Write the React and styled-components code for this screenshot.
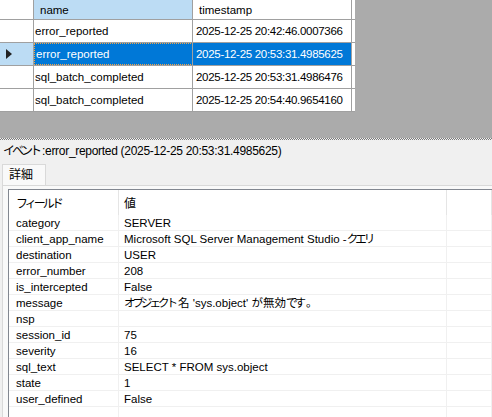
import React from 'react'
import styled, { createGlobalStyle } from 'styled-components'

const Global = createGlobalStyle`
  html, body {
    margin: 0;
    padding: 0;
    overflow: hidden;
  }
  body {
    font-family: "Liberation Sans", "Noto Sans CJK JP", sans-serif;
    font-size: 11px;
    line-height: 14px;
    color: #000;
  }
`

const Window = styled.div`
  width: 492px;
  height: 417px;
  display: flex;
  flex-direction: column;
  overflow: hidden;
  background: #f0f0f0;
`

const TopPane = styled.div`
  height: 138px;
  flex: none;
  background: #ababab;
`

const Splitter = styled.div`
  height: 2px;
  flex: none;
  background-color: #f0f0f0;
  background-image: repeating-conic-gradient(#7a7a7a 0 25%, #f0f0f0 0 50%);
  background-size: 2px 2px;
`

const EventGrid = styled.div`
  width: 355px;
  background: #fff;
`

const GridRow = styled.div`
  display: flex;
  height: ${p => (p.$header ? '19px' : '22px')};
  border-bottom: 1px solid #a0a0a0;
`

const RowHead = styled.div`
  width: 34px;
  flex: none;
  border-right: 1px solid #a0a0a0;
  background: ${p => (p.$current ? '#bcdcf4' : '#fff')};
  display: flex;
  align-items: center;
  padding-left: 6px;
  box-sizing: border-box;
`

const ColHead = styled.div`
  width: 159px;
  flex: none;
  border-right: 1px solid #a0a0a0;
  background: ${p => (p.$active ? '#bcdcf4' : '#fff')};
  padding-left: 6px;
  box-sizing: border-box;
  display: flex;
  align-items: center;
  font-size: 11.5px;
`

const Cell = styled.div`
  width: 159px;
  flex: none;
  box-sizing: border-box;
  display: flex;
  align-items: center;
  padding-left: ${p => (p.$time ? '3px' : '1px')};
  letter-spacing: ${p => (p.$time ? '-0.3px' : '0')};
  font-size: 11.5px;
  white-space: nowrap;
  overflow: hidden;
  background: ${p => (p.$selected ? '#0078d7' : '#fff')};
  color: ${p => (p.$selected ? '#fff' : '#000')};
  border: ${p => (p.$focus ? '1px dotted #f2a64a' : 'none')};
  border-right: 1px solid #a0a0a0;
`

const Pointer = () => (
  <svg width="6" height="10" viewBox="0 0 6 10">
    <path d="M0 0 L6 5 L0 10 Z" fill="#222" />
  </svg>
)

const BottomPane = styled.div`
  flex: 1;
  display: flex;
  flex-direction: column;
  min-height: 0;
`

const Caption = styled.div`
  height: 24px;
  flex: none;
  padding: 4px 0 0 3px;
  box-sizing: border-box;
  font-size: 12px;
  line-height: 14px;
  letter-spacing: -0.3px;
  white-space: nowrap;
`

const Kana = styled.span`
  letter-spacing: -3px;
  margin-right: 3px;
`

const TabStrip = styled.div`
  display: flex;
  padding-left: 2px;
  height: 21px;
  flex: none;
`

const Tab = styled.div`
  width: 44px;
  background: #f9f9f9;
  border: 1px solid #d9d9d9;
  border-bottom: none;
  box-sizing: border-box;
  padding: 3px 0 0 6px;
  font-size: 12px;
`

const TabPage = styled.div`
  flex: 1;
  margin-left: 2px;
  background: #f9f9f9;
  border-top: 1px solid #d9d9d9;
  border-left: 1px solid #d9d9d9;
  padding: 3px 0 0 5px;
  min-height: 0;
`

const DetailGrid = styled.div`
  border-top: 1px solid #828790;
  border-left: 1px solid #828790;
  background: #fff;
  height: 100%;
`

const DetailRow = styled.div`
  display: grid;
  grid-template-columns: 110px 328px 1fr;
  height: ${p => (p.$header ? '25px' : '15px')};
  border-bottom: ${p => (p.$header ? 'none' : '1px solid #f0f0f0')};
`

const DetailCell = styled.div`
  display: flex;
  align-items: center;
  padding-left: ${p => (p.$first ? '7px' : '5px')};
  border-right: 1px solid ${p => (p.$header ? '#e5e5e5' : '#f0f0f0')};
  white-space: nowrap;
  overflow: hidden;
  font-size: ${p => (p.$header ? '12px' : '11.5px')};
  padding-top: ${p => (p.$header ? '2px' : '1px')};
`

const events = [
  { name: 'error_reported', time: '2025-12-25 20:42:46.0007366' },
  { name: 'error_reported', time: '2025-12-25 20:53:31.4985625', selected: true },
  { name: 'sql_batch_completed', time: '2025-12-25 20:53:31.4986476' },
  { name: 'sql_batch_completed', time: '2025-12-25 20:54:40.9654160' },
]

const fields = [
  ['category', 'SERVER'],
  ['client_app_name', <>Microsoft SQL Server Management Studio - <Kana>クエリ</Kana></>],
  ['destination', 'USER'],
  ['error_number', '208'],
  ['is_intercepted', 'False'],
  ['message', <><Kana>オブジェクト</Kana>名 'sys.object'&nbsp;<Kana>が</Kana>無効<Kana>です</Kana>。</>],
  ['nsp', ''],
  ['session_id', '75'],
  ['severity', '16'],
  ['sql_text', 'SELECT * FROM sys.object'],
  ['state', '1'],
  ['user_defined', 'False'],
  ['', ''],
]

export default function App() {
  return (
    <Window>
      <Global />
      <TopPane>
        <EventGrid>
          <GridRow $header>
            <RowHead />
            <ColHead $active>name</ColHead>
            <ColHead>timestamp</ColHead>
          </GridRow>
          {events.map((e, i) => (
            <GridRow key={i}>
              <RowHead $current={e.selected}>{e.selected && <Pointer />}</RowHead>
              <Cell $selected={e.selected} $focus={e.selected}>{e.name}</Cell>
              <Cell $selected={e.selected} $time>{e.time}</Cell>
            </GridRow>
          ))}
        </EventGrid>
      </TopPane>
      <Splitter />
      <BottomPane>
        <Caption>
          <Kana>イベント</Kana>:error_reported (2025-12-25 20:53:31.4985625)
        </Caption>
        <TabStrip>
          <Tab>詳細</Tab>
        </TabStrip>
        <TabPage>
          <DetailGrid>
            <DetailRow $header>
              <DetailCell $header $first><Kana>フィールド</Kana></DetailCell>
              <DetailCell $header>値</DetailCell>
              <DetailCell $header />
            </DetailRow>
            {fields.map(([k, v], i) => (
              <DetailRow key={i}>
                <DetailCell $first>{k}</DetailCell>
                <DetailCell>{v}</DetailCell>
                <DetailCell />
              </DetailRow>
            ))}
          </DetailGrid>
        </TabPage>
      </BottomPane>
    </Window>
  )
}
